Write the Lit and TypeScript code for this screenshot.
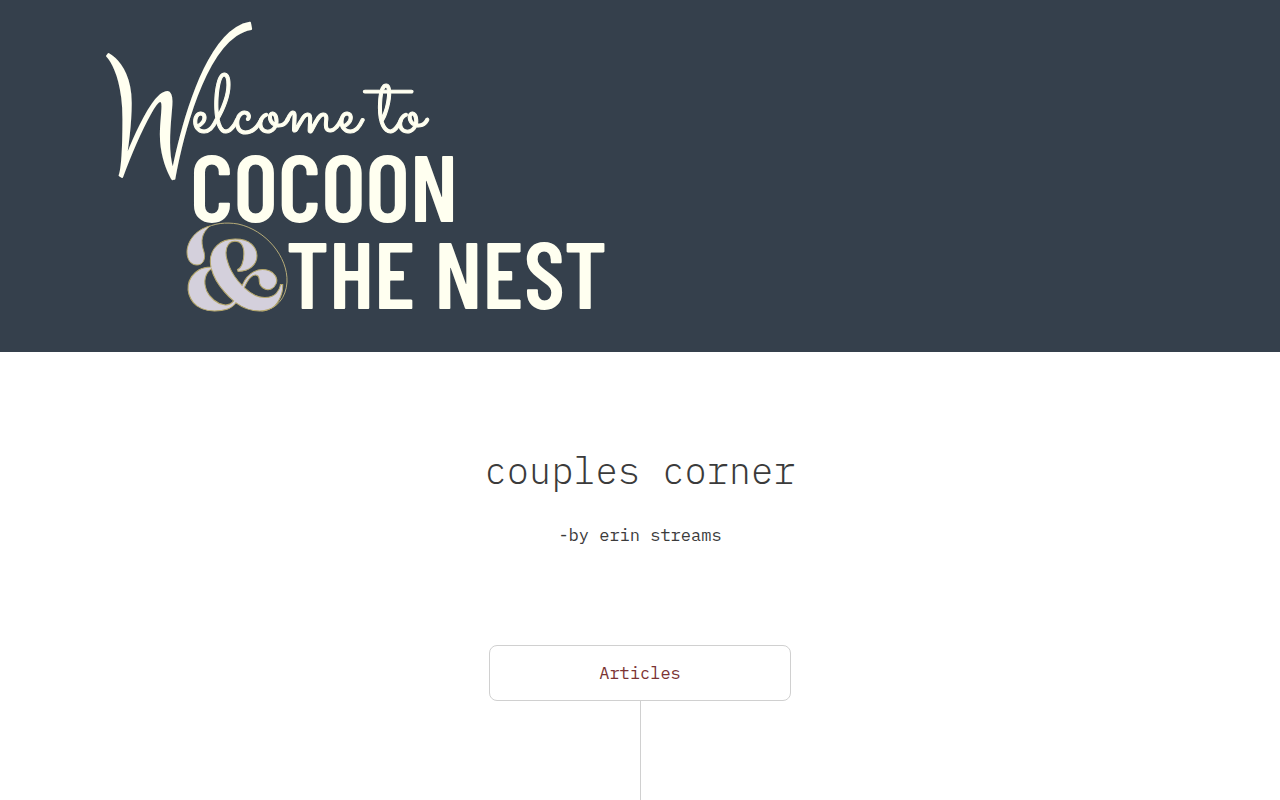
import { LitElement, html, css } from "lit";
import { customElement } from "lit/decorators.js";

@customElement("app-root")
export class AppRoot extends LitElement {
  static styles = css`
    :host {
      display: flex;
      flex-direction: column;
      min-height: 100vh;
      background: #fff;
      color: #3b3b3b;
      font-family: "IBM Plex Mono", "Liberation Mono", monospace;
      font-size: 17px;
      line-height: 28px;
    }
    .banner {
      background: #35404c;
    }
    .banner svg {
      display: block;
      width: 100%;
      height: auto;
    }
    .initial,
    .welcome {
      fill: #fffff0;
      stroke: #fffff0;
      stroke-linejoin: round;
    }
    .initial {
      font-family: "Clicker Script", "Dancing Script", cursive;
      font-size: 152px;
      stroke-width: 2;
    }
    .welcome {
      font-family: "Sacramento", "Dancing Script", cursive;
      font-size: 84px;
      stroke-width: 1;
    }
    .caps {
      font-family: "Barlow Condensed", "Roboto Condensed", sans-serif;
      font-size: 95px;
      font-weight: 600;
      fill: #fffff0;
    }
    .amp {
      font-family: "Rozha One", "Liberation Serif", serif;
      font-size: 116px;
      fill: #d4d0dc;
      stroke: #b5a76a;
      stroke-width: 1;
    }
    .drop {
      fill: #d4d0dc;
      stroke: #b5a76a;
      stroke-width: 1;
    }
    .ring {
      fill: none;
      stroke: #b5ab78;
      stroke-width: 1;
      stroke-linecap: round;
    }
    main {
      flex: 1;
      display: flex;
      flex-direction: column;
      align-items: center;
      padding: 94px 24px 0;
    }
    h1 {
      margin: 0;
      font-size: 37px;
      line-height: 48px;
      font-weight: 300;
      text-align: center;
    }
    .byline {
      margin: 27px 0 0;
    }
    .card {
      box-sizing: border-box;
      width: 100%;
      max-width: 302px;
      margin-top: 96px;
      padding: 13px 24px;
      border: 1px solid #d0d0d0;
      border-radius: 8px;
      color: #7b3333;
      text-align: center;
      text-decoration: none;
    }
    .stem {
      flex: 1;
      border-left: 1px solid #d0d0d0;
      margin-left: 1px;
    }
  `;

  render() {
    return html`
      <header class="banner">
        <svg viewBox="0 0 1280 352" role="img" aria-label="Welcome to Cocoon & the Nest">
          <text class="initial" x="104" y="165">W</text>
          <text class="welcome" x="192" y="132">elcome to</text>
          <text class="caps" x="190" y="222">COCOON</text>
          <path class="ring" d="M204 229C214 223 226 222 238 224C266 230 288 257 287 282C286 298 277 309 262 311" />
          <path class="drop" d="M210 226C194 230 187 243 187 252C187 260 191 265 197 265C203 265 206 259 204 252C200 240 202 233 210 226Z" />
          <text class="amp" x="184" y="310">&amp;</text>
          <text class="caps" x="286" y="309">THE NEST</text>
        </svg>
      </header>
      <main>
        <h1>couples corner</h1>
        <p class="byline">-by erin streams</p>
        <a class="card" href="#articles">Articles</a>
        <div class="stem"></div>
      </main>
    `;
  }
}
